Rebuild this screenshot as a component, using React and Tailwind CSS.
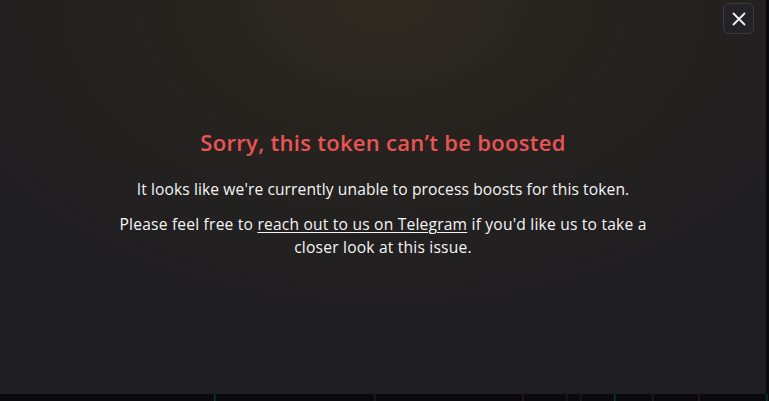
import React from "react";

function Candles() {
  const c = [
    [214, "#15302d"], [374, "#1c1c24"], [522, "#2e161b"], [566, "#26151a"], [580, "#26151a"], [614, "#15302d"], [652, "#1c1c24"], [698, "#2e161b"], [766, "#15302d"]
  ];
  return (
    <svg width="769" height="7" className="block">
      {c.map(([x, col], i) => (
        <rect key={i} x={x} y={0} width="1.5" height="7" fill={col} />
      ))}
    </svg>
  );
}

export default function App() {
  return (
    <div className="w-[769px] h-[401px] bg-[#0a0a0e] overflow-hidden flex flex-col">
      <div className="flex">
        <div className="relative w-[766px] h-[394px] bg-[radial-gradient(ellipse_70%_90%_at_50%_0%,#2e2920_0%,#26231f_40%,#1e1d21_100%)] flex flex-col items-center pt-[127px]">
          <button className="absolute top-[3px] right-[12px] w-[31px] h-[31px] rounded-[6px] border border-[#3b3b3f] bg-[#232226] flex items-center justify-center">
            <svg width="14" height="14" viewBox="0 0 14 14" fill="none">
              <path d="M1.5 1.5L12.5 12.5M12.5 1.5L1.5 12.5" stroke="#f2f2f2" strokeWidth="1.8" strokeLinecap="round" />
            </svg>
          </button>
          <h1 className="font-['Open_Sans',sans-serif] font-semibold text-[22px] leading-[30px] text-[#ea5455] tracking-[0.3px]">
            Sorry, this token can’t be boosted
          </h1>
          <p className="mt-[20px] font-['Open_Sans',sans-serif] font-medium text-[15.6px] leading-6 text-[#f5f5f5] tracking-[0.1px]">
            It looks like we're currently unable to process boosts for this token.
          </p>
          <p className="mt-3 w-[540px] text-center font-['Open_Sans',sans-serif] font-medium text-[15.6px] leading-[23px] text-[#f5f5f5] tracking-[0.2px]">
            Please feel free to <span className="underline underline-offset-2 decoration-1">reach out to us on Telegram</span> if you'd like us to take a closer look at this issue.
          </p>
        </div>
      </div>
      <Candles />
    </div>
  );
}
